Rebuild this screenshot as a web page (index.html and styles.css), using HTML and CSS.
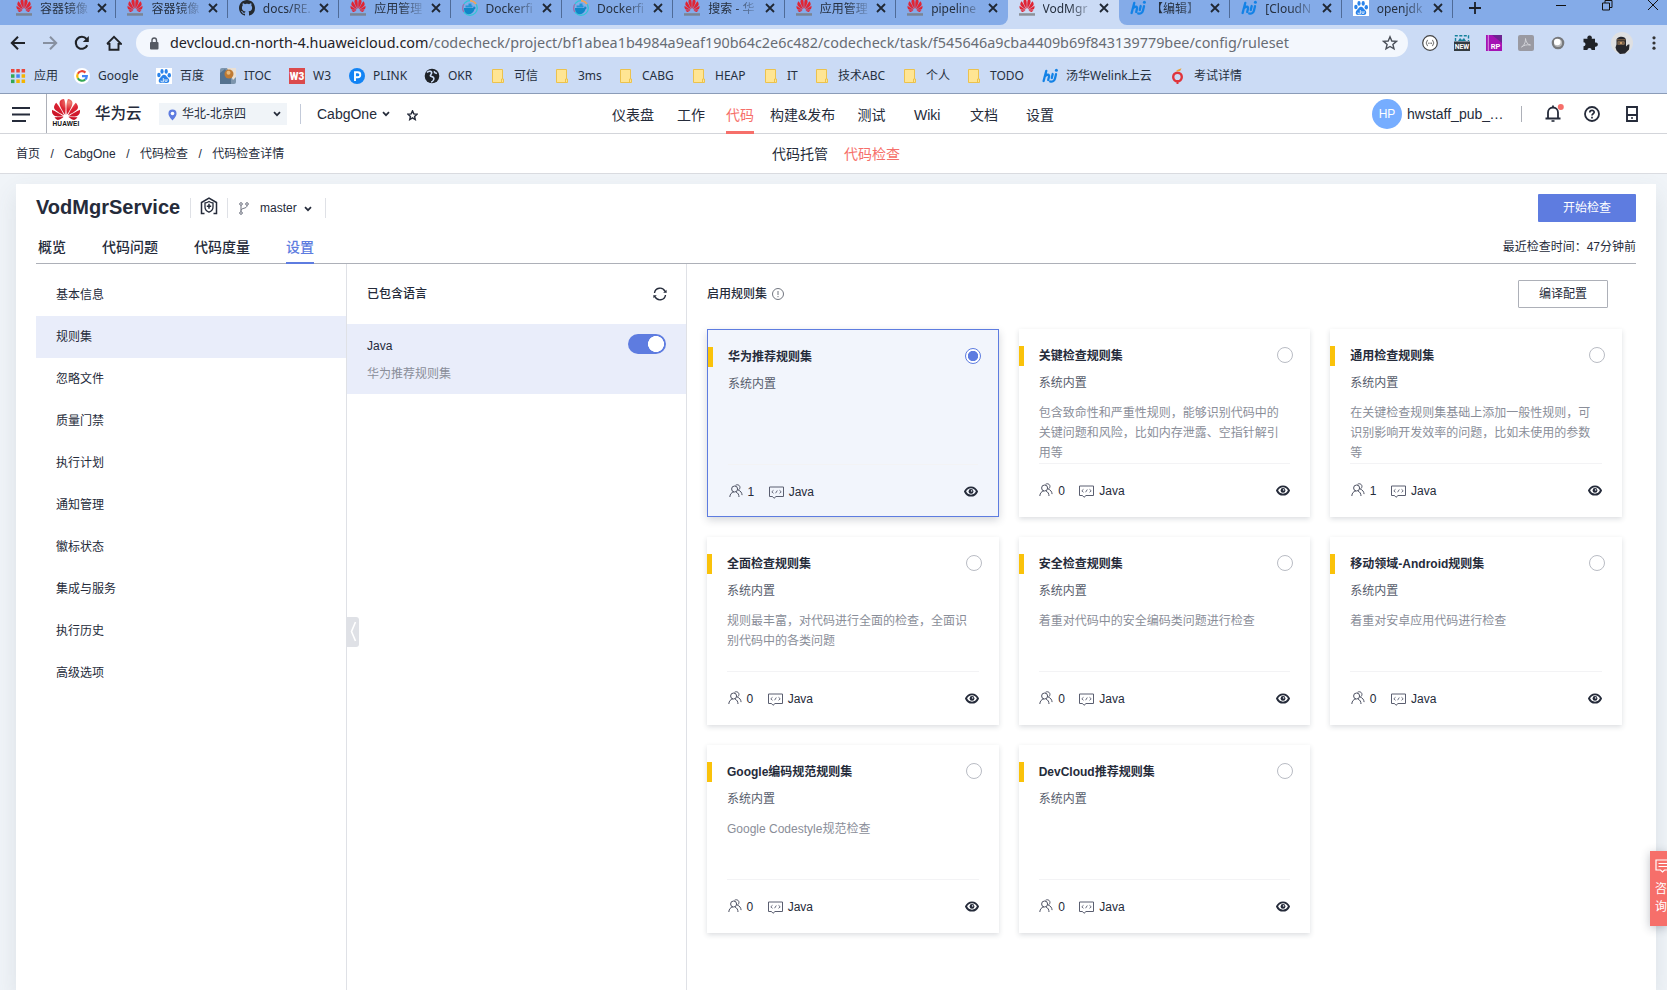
FILE: index.html
```html
<!DOCTYPE html>
<html lang="zh-CN">
<head>
<meta charset="utf-8">
<title>VodMgrService</title>
<link rel="stylesheet" href="styles.css">
</head>
<body>
<svg class="defs" xmlns="http://www.w3.org/2000/svg">
  <defs>
    <radialGradient id="petal" cx="0.6" cy="0.15" r="1"><stop offset="0" stop-color="#f0897a"/><stop offset="0.35" stop-color="#dd2433"/><stop offset="1" stop-color="#c00a20"/></radialGradient>
    <symbol id="hw" viewBox="0 2.9 24 18.2" preserveAspectRatio="none"><path d="M3.67 6.14S1.82 7.91 1.72 9.78v.35c.08 1.51 1.22 2.4 1.22 2.4 1.83 1.79 6.26 4.04 7.3 4.55 0 0 .06.03.1-.01l.02-.04v-.04C7.52 10.8 3.67 6.14 3.67 6.14zM9.65 18.6c-.02-.08-.1-.08-.1-.08l-7.38.26c.8 1.43 2.15 2.53 3.56 2.2.96-.25 3.16-1.78 3.88-2.3.06-.05.04-.09.04-.09zm.08-.78C6.49 15.63.21 12.28.21 12.28c-.15.46-.2.9-.21 1.3v.07c0 1.07.4 1.82.4 1.82.8 1.69 2.34 2.2 2.34 2.2.7.3 1.4.31 1.4.31.12.02 4.4 0 5.54 0 .05 0 .08-.05.08-.05v-.06c0-.03-.03-.05-.03-.05zM9.06 3.19a3.42 3.42 0 00-2.57 3.15v.41c.03.6.16 1.05.16 1.05.66 2.9 3.86 7.65 4.55 8.65.05.05.1.03.1.03a.1.1 0 00.06-.1c1.06-10.6-1.11-13.42-1.11-13.42-.32.02-1.19.23-1.19.23zm8.299 2.27s-.49-1.8-2.44-2.28c0 0-.57-.14-1.17-.22 0 0-2.18 2.81-1.12 13.43.01.07.06.08.06.08.07.03.1-.03.1-.03.72-1.03 3.9-5.76 4.55-8.64 0 0 .36-1.4.02-2.34zm-2.92 13.07s-.07 0-.09.05c0 0-.01.07.03.1.7.51 2.85 2 3.88 2.3 0 0 .16.05.43.06h.14c.69-.02 1.9-.37 3-2.26l-7.4-.25zm7.83-8.41c.14-2.06-1.94-3.97-1.94-3.98 0 0-3.85 4.66-6.67 10.8 0 0-.03.08.02.13l.04.01h.06c1.06-.53 5.46-2.77 7.28-4.54 0 0 1.15-.93 1.21-2.42zm1.52 2.14s-6.28 3.37-9.52 5.55c0 0-.05.04-.03.11 0 0 .03.06.07.06 1.16 0 5.56 0 5.67-.02 0 0 .57-.02 1.27-.29 0 0 1.56-.5 2.37-2.27 0 0 .73-1.45.17-3.14z"/></symbol>
    <symbol id="hwtab" viewBox="0 0 16 16"><svg x="0.2" y="-1" width="15.600" height="13"><use href="#hw"/></svg><rect x="0" y="13.200" width="16" height="2.500" fill="#777" opacity=".75"/></symbol>
    <symbol id="github" viewBox="0 0 16 16"><path d="M8 0C3.58 0 0 3.58 0 8c0 3.54 2.29 6.53 5.47 7.59.4.07.55-.17.55-.38 0-.19-.01-.82-.01-1.49-2.01.37-2.53-.49-2.69-.94-.09-.23-.48-.94-.82-1.13-.28-.15-.68-.52-.01-.53.63-.01 1.08.58 1.23.82.72 1.21 1.87.87 2.33.66.07-.52.28-.87.51-1.07-1.78-.2-3.64-.89-3.64-3.95 0-.87.31-1.59.82-2.15-.08-.2-.36-1.02.08-2.12 0 0 .67-.21 2.2.82.64-.18 1.32-.27 2-.27s1.36.09 2 .27c1.53-1.04 2.2-.82 2.2-.82.44 1.1.16 1.92.08 2.12.51.56.82 1.27.82 2.15 0 3.07-1.87 3.75-3.65 3.95.29.25.54.73.54 1.48 0 1.07-.01 1.93-.01 2.2 0 .21.15.46.55.38A8.01 8.01 0 0016 8c0-4.42-3.58-8-8-8z" fill="#24292e"/></symbol>
    <symbol id="docker" viewBox="0 0 16 16"><circle cx="8" cy="8" r="7.3" fill="none" stroke="#2fc6d6" stroke-width="1.3"/><path d="M8 .7A7.3 7.3 0 0 1 14 4" fill="none" stroke="#f0a35e" stroke-width="1.8"/><path d="M1.800 12A7.300 7.300 0 0 1 2 4" fill="none" stroke="#a86ab0" stroke-width="1.300"/><path d="M2 8h9l1-2 1 1.500 1 .3-1.500 1.400c-1 3.500-3.400 5-6 5C4 14.200 2 12 2 8z" fill="#0f86c8"/><path d="M3.500 5.600h7v2h-7zM6.500 3.600h3v2h-3z" fill="#1e96d6"/></symbol>
    <symbol id="hi" viewBox="0 0 16 16"><g fill="none" stroke="#1382e6" stroke-width="2.300" stroke-linecap="round"><path d="M4.300 2.800L1.600 13M3 8.300c2-2.300 4.600-2 4 .5L6.200 12M8.200 13.500c2.200.6 4.200-.6 4.800-3l1-4.300M10.700 6l-.9 4"/></g><circle cx="14.400" cy="2.200" r="1.500" fill="#1382e6"/></symbol>
    <symbol id="baidu" viewBox="0 0 16 16"><rect width="16" height="16" fill="#fff"/><g fill="#2a83ea"><ellipse cx="2.900" cy="7" rx="1.700" ry="2.200"/><ellipse cx="6" cy="3.400" rx="1.600" ry="2.300"/><ellipse cx="10.200" cy="3.400" rx="1.600" ry="2.300"/><ellipse cx="13.300" cy="7.200" rx="1.700" ry="2.200"/><path d="M8 6.800c2 0 2.600 2 4 3.200 2 1.800 1.600 5-1 5-1.300 0-1.800-.3-3-.3s-1.700.3-3 .3c-2.600 0-3-3.200-1-5C5.400 8.800 6 6.800 8 6.800z"/></g><path d="M5 12.500a1.200 1.200 0 1 0 2.300 0M7.300 10v3.500M9 11v2.300h2V11" stroke="#fff" stroke-width=".8" fill="none"/></symbol>
    <symbol id="x" viewBox="0 0 10 10"><path d="M1 1l8 8M9 1l-8 8" stroke="currentColor" stroke-width="1.800" fill="none"/></symbol>
    <symbol id="folder" viewBox="0 0 16 16"><path d="M2.500 1.500h10v9.500h1v3.500h-11z" fill="#ffe593" stroke="#ecc24d"/><path d="M11.500 14.500v-3.500h1" fill="none" stroke="#ecc24d"/></symbol>
    <symbol id="chev" viewBox="0 0 8 6"><path d="M1 1.200l3 3 3-3" stroke="currentColor" stroke-width="1.700" fill="none"/></symbol>
    <symbol id="users" viewBox="0 0 14 14"><g fill="none" stroke="#4e5263" stroke-width="1"><circle cx="5.600" cy="5" r="3"/><path d="M.8 13c.2-3 1.800-4.700 4-5M10 13c-.1-2.300-.9-4-3-5M6.500 1.300c2.500-1.600 5.300.6 4.200 3.200-.3.800-.8 1.200-1.400 1.600 2.200.7 3.600 2.500 3.800 5"/></g></symbol>
    <symbol id="code" viewBox="0 0 15 13"><path d="M.5 1h14v9.500H7l-2 1.800-1.500-1.800H.5z" fill="none" stroke="#5a5e70"/><path d="M4.500 4.300L2.800 5.800l1.700 1.500M10.500 4.300l1.700 1.500-1.700 1.500M8.300 4.500L6.600 7.200" fill="none" stroke="#5a5e70" stroke-width=".9"/></symbol>
    <symbol id="eye" viewBox="0 0 14 11"><path d="M1 5.500C3.500 0 10.500 0 13 5.500 10.500 11 3.500 11 1 5.500z" fill="none" stroke="#252b3a" stroke-width="1.900"/><circle cx="7" cy="5.400" r="2.400" fill="#252b3a"/><circle cx="7.600" cy="4.900" r=".8" fill="#cfd3dd"/></symbol>
  </defs>
</svg>

<div class="tabstrip">
  <div class="tab"><svg class="fav hw"><use href="#hwtab"/></svg><span>容器镜像</span><svg class="close"><use href="#x"/></svg></div>
  <div class="tab"><svg class="fav hw"><use href="#hwtab"/></svg><span>容器镜像</span><svg class="close"><use href="#x"/></svg></div>
  <div class="tab"><svg class="fav"><use href="#github"/></svg><span>docs/RE.</span><svg class="close"><use href="#x"/></svg></div>
  <div class="tab"><svg class="fav hw"><use href="#hwtab"/></svg><span>应用管理</span><svg class="close"><use href="#x"/></svg></div>
  <div class="tab"><svg class="fav"><use href="#docker"/></svg><span>Dockerfi</span><svg class="close"><use href="#x"/></svg></div>
  <div class="tab"><svg class="fav"><use href="#docker"/></svg><span>Dockerfi</span><svg class="close"><use href="#x"/></svg></div>
  <div class="tab"><svg class="fav hw"><use href="#hwtab"/></svg><span>搜索 - 华</span><svg class="close"><use href="#x"/></svg></div>
  <div class="tab"><svg class="fav hw"><use href="#hwtab"/></svg><span>应用管理</span><svg class="close"><use href="#x"/></svg></div>
  <div class="tab before"><svg class="fav hw"><use href="#hwtab"/></svg><span>pipeline</span><svg class="close"><use href="#x"/></svg></div>
  <div class="tab active"><svg class="fav hw"><use href="#hwtab"/></svg><span>VodMgr</span><svg class="close"><use href="#x"/></svg></div>
  <div class="tab after"><svg class="fav"><use href="#hi"/></svg><span class="brk">【编辑】</span><svg class="close"><use href="#x"/></svg></div>
  <div class="tab"><svg class="fav"><use href="#hi"/></svg><span>[CloudN</span><svg class="close"><use href="#x"/></svg></div>
  <div class="tab"><svg class="fav"><use href="#baidu"/></svg><span>openjdk</span><svg class="close"><use href="#x"/></svg></div>
  <svg class="plus" viewBox="0 0 12 12"><path d="M6 0v12M0 6h12" stroke="#1b1f27" stroke-width="1.800"/></svg>
  <div class="winctl">
    <svg viewBox="0 0 12 12"><path d="M1 6.500h10" stroke="#111"/></svg>
    <svg viewBox="0 0 12 12"><path d="M1.500 4h7v7h-7zM4 4V1.500h7V8.500H8.500" fill="none" stroke="#111"/></svg>
    <svg viewBox="0 0 12 12"><path d="M1 1l10 10M11 1L1 11" stroke="#111"/></svg>
  </div>
</div>

<div class="toolbar">
  <svg class="tb" viewBox="0 0 16 16"><path d="M15 8H2.500M8 1.800L1.800 8 8 14.200" fill="none" stroke="#1f2227" stroke-width="2"/></svg>
  <svg class="tb" viewBox="0 0 16 16"><path d="M1 8h12.500M8 1.800L14.200 8 8 14.200" fill="none" stroke="#8790a0" stroke-width="2"/></svg>
  <svg class="tb" viewBox="0 0 16 16"><path d="M13.300 10.300A6 6 0 1 1 12.500 4" fill="none" stroke="#1f2227" stroke-width="2.100"/><path d="M14.800 1v6H8.800z" fill="#1f2227"/></svg>
  <svg class="tb" viewBox="0 0 16 16"><path d="M3.500 8v6.800h9V8M1 8.800l7-7 7 7h-2.500M3.500 8.800H1" fill="none" stroke="#1f2227" stroke-width="1.900"/></svg>
  <div class="url">
    <svg class="lock" viewBox="0 0 10 13"><rect x="1" y="5" width="8.500" height="7.500" rx="1" fill="#555a63"/><path d="M3 5V3.300a2.200 2.200 0 0 1 4.500 0V5" fill="none" stroke="#555a63" stroke-width="1.400"/></svg>
    <div class="addr"><b>devcloud.cn-north-4.huaweicloud.com</b>/codecheck/project/bf1abea1b4984a9eaf190b64c2e6c482/codecheck/task/f545646a9cba4409b69f843139779bee/config/ruleset</div>
    <svg class="bstar" viewBox="0 0 16 16"><path d="M8 1.800l1.800 4.200 4.600.4-3.500 3 1.100 4.500L8 11.500l-4 2.400 1.100-4.500-3.500-3 4.600-.4z" fill="none" stroke="#4a4f58" stroke-width="1.400"/></svg>
  </div>
  <div class="exts">
    <svg viewBox="0 0 16 16"><circle cx="8" cy="8" r="7.300" fill="#fff" stroke="#444" stroke-width="1.200"/><path d="M5.800 5.200c-1.400 0-.4 2.200-1.900 2.800 1.500.6.500 2.800 1.900 2.800M10.200 5.200c1.400 0 .4 2.200 1.900 2.800-1.500.6-.5 2.800-1.900 2.800" fill="none" stroke="#444" stroke-width=".9"/><path d="M6.200 8.200h3.800" stroke="#444" stroke-dasharray="1 .4"/></svg>
    <svg viewBox="0 0 16 16"><path d="M1.500 6V.8h13V6" fill="none" stroke="#15829c" stroke-width="1.400" stroke-dasharray="3 1.500"/><path d="M4 6l2-3 2 2 2-2 2 3z" fill="#15829c"/><rect y="6.500" width="16" height="9.500" fill="#333b40"/><text x="8" y="14" font-size="6.800" font-weight="700" fill="#fff" text-anchor="middle" font-family="Roboto">NEW</text></svg>
    <svg viewBox="0 0 16 16"><rect width="16" height="16" fill="#a513b4"/><path d="M6 0h10v8z" fill="#6e2391"/><path d="M2.300 0v16" stroke="#e9b5ee" stroke-width=".8"/><text x="9.500" y="14" font-size="7.500" font-weight="700" fill="#fff" text-anchor="middle" font-family="Roboto">RP</text></svg>
    <svg viewBox="0 0 16 16"><rect width="16" height="16" rx="2" fill="#9a9aa2"/><path d="M3.500 12c2-.8 4.300-4.500 4-8.500.3 3.500 2 6 5 6.500-4-.6-6.500.2-9 2z" fill="none" stroke="#d2d3d8"/></svg>
    <svg viewBox="0 0 16 16"><circle cx="8" cy="8" r="5.200" fill="#b9babc" stroke="#77797c" stroke-width="2.200"/><circle cx="7.300" cy="7" r="3.300" fill="#fff"/></svg>
    <svg viewBox="0 0 16 16"><path d="M1.500 3.800h4a2.300 2.300 0 1 1 4.200 0h3.300v3.700a2.200 2.200 0 1 1 0 4.200v3.300H9.600a2.100 2.100 0 0 0-4.200 0H1.500v-3.800a2 2 0 0 0 0-4z" fill="#1f2227"/></svg>
    <svg class="ninja" viewBox="0 0 22 22"><circle cx="11" cy="11" r="11" fill="#dfe0e2"/><path d="M5.500 8.500c0-4.500 9-5 9.500-.5v6.500l2-2 1.500 0-.5 5-4 4-5 .5-3.500-3.500-1-3 1-3z" fill="#26262b"/><path d="M6.500 9.500h7v3h-7z" fill="#c89a6a"/><path d="M6.500 11h2.500M11 11h2" stroke="#26262b"/><path d="M6 7.800h8.500" stroke="#8a6a48" stroke-width="1"/></svg>
    <svg viewBox="0 0 16 16"><circle cx="8" cy="2.800" r="1.600" fill="#333"/><circle cx="8" cy="8" r="1.600" fill="#333"/><circle cx="8" cy="13.200" r="1.600" fill="#333"/></svg>
  </div>
</div>

<div class="bookmarks">
  <div><svg viewBox="0 0 16 16"><path d="M1 1h3.500v3.500H1zM6.300 1h3.500v3.500H6.300zM11.600 1h3.500v3.500h-3.500z" fill="#e8453c"/><path d="M1 6.300h3.500v3.500H1z" fill="#34a853"/><path d="M6.300 6.300h3.500v3.500H6.300z" fill="#4285f4"/><path d="M11.600 6.300h3.500v3.500h-3.500zM11.600 11.600h3.500v3.500h-3.500zM6.300 11.600h3.500v3.500H6.300z" fill="#f5b400"/><path d="M1 11.600h3.500v3.500H1z" fill="#34a853"/></svg>应用</div>
  <div><svg viewBox="0 0 16 16"><circle cx="8" cy="8" r="8" fill="#fff"/><g fill="none" stroke-width="2.200"><path d="M11.400 4.600A4.800 4.800 0 0 0 3.800 5.700" stroke="#ea4335"/><path d="M3.800 5.700a4.800 4.800 0 0 0 0 4.600" stroke="#fbbc05"/><path d="M3.800 10.300a4.800 4.800 0 0 0 7.400 1.200" stroke="#34a853"/><path d="M11.200 11.500a4.800 4.800 0 0 0 1.600-3.400H8" stroke="#4285f4"/></g></svg>Google</div>
  <div><svg><use href="#baidu"/></svg>百度</div>
  <div><svg viewBox="0 0 16 16"><rect width="16" height="16" rx="2" fill="#7d95ad"/><path d="M0 16V5l5-4 6 9v6z" fill="#55728f"/><path d="M7 0h9v9l-3 3z" fill="#eadfd2"/><circle cx="9" cy="6" r="4.500" fill="#bf7a33"/><circle cx="8.500" cy="4.800" r="2" fill="#e8b878"/></svg>ITOC</div>
  <div><svg viewBox="0 0 16 16"><rect width="16" height="16" fill="#db4a4c"/><text x="8" y="12" font-size="10" font-weight="900" fill="#fff" text-anchor="middle" font-family="Roboto" textLength="14.500">W3</text></svg>W3</div>
  <div><svg viewBox="0 0 16 16"><circle cx="8" cy="8" r="8" fill="#1283f4"/><path d="M6 13V4.200h2.800a2.500 2.500 0 0 1 0 5H7" fill="none" stroke="#fff" stroke-width="1.900"/></svg>PLINK</div>
  <div><svg viewBox="0 0 16 16"><circle cx="8" cy="8" r="7.300" fill="#1f2329"/><path d="M3 4.500c2.500-2.300 5.500-1 4.500 1S5.500 8 7.500 8.500s3 1.500 2 3.500-2.500 2-2.500 2M10.500 3c-.5 1.500.5 2 2.500 2.500" fill="none" stroke="#cbdbf5" stroke-width="1.600"/></svg>OKR</div>
  <div><svg><use href="#folder"/></svg>可信</div>
  <div><svg><use href="#folder"/></svg>3ms</div>
  <div><svg><use href="#folder"/></svg>CABG</div>
  <div><svg><use href="#folder"/></svg>HEAP</div>
  <div><svg><use href="#folder"/></svg>IT</div>
  <div><svg><use href="#folder"/></svg>技术ABC</div>
  <div><svg><use href="#folder"/></svg>个人</div>
  <div><svg><use href="#folder"/></svg>TODO</div>
  <div><svg><use href="#hi"/></svg>汤华Welink上云</div>
  <div><svg viewBox="0 0 16 16"><circle cx="7.500" cy="9" r="4.300" fill="none" stroke="#e0343c" stroke-width="2.400"/><path d="M7.500 13v3" stroke="#e0343c" stroke-width="2"/><path d="M5.500 3.200L9 1.200l2.500-1-1.500 3z" fill="#f0a02c"/></svg>考试详情</div>
</div>

<header class="top">
  <div class="burger"><svg viewBox="0 0 18 15"><path d="M0 1h18M0 7.500h18M0 14h14" stroke="#252b3a" stroke-width="2"/></svg></div>
  <div class="logo"><svg class="mark"><use href="#hw" fill="url(#petal)"/></svg><span>HUAWEI</span></div>
  <div class="brand">华为云</div>
  <div class="region"><svg class="pin" viewBox="0 0 10 13"><path d="M5 .5a4.500 4.500 0 0 1 4.500 4.500C9.500 8 5 12.500 5 12.500S.5 8 .5 5A4.500 4.500 0 0 1 5 .5z" fill="#5e7ce0"/><circle cx="5" cy="4.800" r="2" fill="#fff"/></svg><span>华北-北京四</span><svg class="chev"><use href="#chev"/></svg></div>
  <div class="proj"><span>CabgOne</span><svg class="chev"><use href="#chev"/></svg><svg class="star" viewBox="0 0 10 10"><path d="M5 .8l1.200 2.700 2.900.3-2.200 2 .6 2.900L5 7.200 2.500 8.700l.6-2.900-2.200-2 2.900-.3z" fill="none" stroke="#252b3a" stroke-width="1.300"/></svg></div>
  <nav class="nav">
    <a>仪表盘</a><a>工作</a><a class="on"><span>代码</span></a><a>构建&amp;发布</a><a>测试</a><a>Wiki</a><a>文档</a><a>设置</a>
  </nav>
  <div class="user">
    <div class="avatar">HP</div><span class="name">hwstaff_pub_<b>...</b></span><i></i>
    <svg class="bell" viewBox="0 0 19 18"><path d="M.5 14.500h15M3 14V8.500a5 5 0 0 1 10 0V14M8 1.500v2" fill="none" stroke="#252b3a" stroke-width="1.800"/><path d="M6.500 17h3" stroke="#252b3a" stroke-width="1.600"/><circle cx="15.800" cy="3" r="3" fill="#f66f6a"/></svg>
    <svg class="help" viewBox="0 0 16 16"><circle cx="8" cy="8" r="7" fill="none" stroke="#252b3a" stroke-width="1.800"/><path d="M5.800 6.500c0-3 4.500-2.800 4.400-.2C10.100 7.800 8 7.800 8 9.600M8 10.800v1.600" fill="none" stroke="#252b3a" stroke-width="1.700"/></svg>
    <svg class="phone" viewBox="0 0 12 16"><path d="M1 1h10v14H1zM1 9h10" fill="none" stroke="#252b3a" stroke-width="1.900"/><path d="M5 12h2" stroke="#252b3a" stroke-width="1.600"/></svg>
  </div>
</header>

<div class="crumbbar">
  <div class="crumbs"><span>首页</span><i>/</i><span>CabgOne</span><i>/</i><span>代码检查</span><i>/</i><span>代码检查详情</span></div>
  <div class="subnav"><span>代码托管</span><span class="on">代码检查</span></div>
</div>

<main class="panel">
  <div class="titlebar">
    <h1>VodMgrService</h1>
    <div class="badge"><svg viewBox="0 0 18 18"><path d="M4.500 16.500H1.500V5.500L9 1 16.500 5.500v11h-3" fill="none" stroke="#252b3a" stroke-width="1.500"/><path d="M9 4.500c1.500 1 2.500 1.300 4 1.500v4c0 2.500-1.500 4.200-4 5.200-2.500-1-4-2.700-4-5.200V6c1.500-.2 2.500-.5 4-1.500z" fill="none" stroke="#252b3a" stroke-width="1.300"/><path d="M9 6.800v5M6.800 9.300h4.400" stroke="#252b3a" stroke-width="1.500"/></svg></div>
    <div class="branch"><svg class="fork" viewBox="0 0 10 13"><g fill="none" stroke="#6a6e7c" stroke-width="1"><circle cx="2" cy="2" r="1.300"/><circle cx="8" cy="2" r="1.300"/><circle cx="2" cy="11" r="1.300"/><path d="M2 3.500v6M8 3.500C8 7 2.500 5.500 2 8.500"/></g></svg><span>master</span><svg class="chev"><use href="#chev"/></svg></div>
    <button class="primary">开始检查</button>
  </div>
  <div class="tabs"><span>概览</span><span>代码问题</span><span>代码度量</span><span class="on">设置</span><em>最近检查时间：47分钟前</em></div>
  <div class="cols">
    <ul class="menu"><li>基本信息</li><li class="on">规则集</li><li>忽略文件</li><li>质量门禁</li><li>执行计划</li><li>通知管理</li><li>徽标状态</li><li>集成与服务</li><li>执行历史</li><li>高级选项</li></ul>
    <section class="langs">
      <div class="head"><span>已包含语言</span><svg viewBox="0 0 14 14"><path d="M1.500 6A5.500 5.500 0 0 1 12 4.500M12.500 8A5.500 5.500 0 0 1 2 9.500" fill="none" stroke="#252b3a" stroke-width="1.400"/><path d="M13.800 5.800h-3.600l3.200-3zM.2 8.200h3.600l-3.200 3z" fill="#252b3a"/></svg></div>
      <div class="lang"><div><b>Java</b><p>华为推荐规则集</p></div><div class="toggle"></div></div>
      <div class="handle"><svg viewBox="0 0 12 30"><path d="M8.500 5L4.500 14.500l4 9.500" fill="none" stroke="#fff" stroke-width="1.600"/></svg></div>
    </section>
    <section class="rules">
      <div class="head"><span>启用规则集</span><svg viewBox="0 0 12 12"><circle cx="6" cy="6" r="5.500" fill="none" stroke="#71757f"/><path d="M6 3v4M6 8v1.200" stroke="#71757f"/></svg><button>编译配置</button></div>
      <div class="grid">
        <article class="card sel"><h3>华为推荐规则集</h3><h4>系统内置</h4><p></p><footer><svg class="u"><use href="#users"/></svg><span>1</span><svg class="c"><use href="#code"/></svg><span>Java</span><svg class="e"><use href="#eye"/></svg></footer><i class="radio"></i></article>
        <article class="card"><h3>关键检查规则集</h3><h4>系统内置</h4><p>包含致命性和严重性规则，能够识别代码中的关键问题和风险，比如内存泄露、空指针解引用等</p><footer><svg class="u"><use href="#users"/></svg><span>0</span><svg class="c"><use href="#code"/></svg><span>Java</span><svg class="e"><use href="#eye"/></svg></footer><i class="radio"></i></article>
        <article class="card"><h3>通用检查规则集</h3><h4>系统内置</h4><p>在关键检查规则集基础上添加一般性规则，可识别影响开发效率的问题，比如未使用的参数等</p><footer><svg class="u"><use href="#users"/></svg><span>1</span><svg class="c"><use href="#code"/></svg><span>Java</span><svg class="e"><use href="#eye"/></svg></footer><i class="radio"></i></article>
        <article class="card"><h3>全面检查规则集</h3><h4>系统内置</h4><p>规则最丰富，对代码进行全面的检查，全面识别代码中的各类问题</p><footer><svg class="u"><use href="#users"/></svg><span>0</span><svg class="c"><use href="#code"/></svg><span>Java</span><svg class="e"><use href="#eye"/></svg></footer><i class="radio"></i></article>
        <article class="card"><h3>安全检查规则集</h3><h4>系统内置</h4><p>着重对代码中的安全编码类问题进行检查</p><footer><svg class="u"><use href="#users"/></svg><span>0</span><svg class="c"><use href="#code"/></svg><span>Java</span><svg class="e"><use href="#eye"/></svg></footer><i class="radio"></i></article>
        <article class="card"><h3>移动领域-Android规则集</h3><h4>系统内置</h4><p>着重对安卓应用代码进行检查</p><footer><svg class="u"><use href="#users"/></svg><span>0</span><svg class="c"><use href="#code"/></svg><span>Java</span><svg class="e"><use href="#eye"/></svg></footer><i class="radio"></i></article>
        <article class="card"><h3>Google编码规范规则集</h3><h4>系统内置</h4><p>Google Codestyle规范检查</p><footer><svg class="u"><use href="#users"/></svg><span>0</span><svg class="c"><use href="#code"/></svg><span>Java</span><svg class="e"><use href="#eye"/></svg></footer><i class="radio"></i></article>
        <article class="card"><h3>DevCloud推荐规则集</h3><h4>系统内置</h4><p></p><footer><svg class="u"><use href="#users"/></svg><span>0</span><svg class="c"><use href="#code"/></svg><span>Java</span><svg class="e"><use href="#eye"/></svg></footer><i class="radio"></i></article>
      </div>
    </section>
  </div>
</main>

<aside class="consult"><svg viewBox="0 0 16 14"><path d="M1 1h14v10H9.500L7.500 13l-2-2H1z" fill="none" stroke="#fff" stroke-width="1.200"/><path d="M3.500 4.500H16M3.500 7.500H16" stroke="#fff" stroke-width="1.200"/></svg><span>咨</span><span>询</span></aside>
</body>
</html>
```
FILE: styles.css
```css
* { box-sizing: border-box; }
html, body { height: 990px; overflow: hidden; }
body {
  margin: 0;
  display: flex;
  flex-direction: column;
  background: #f0f4f8;
  color: #252b3a;
  font: 12px/20px "Liberation Sans", "Noto Sans CJK SC", sans-serif;
  white-space: nowrap;
}
svg { display: block; flex: none; }
h1, h3, h4, p, ul { margin: 0; padding: 0; }
i, em { font-style: normal; }
button { font: inherit; padding: 0; }
.defs { position: absolute; width: 0; height: 0; }
.chev { width: 8px; height: 6px; }

/* browser chrome */
.tabstrip { height: 25px; flex: none; display: flex; padding-left: 5px; background: linear-gradient(to right, #84abe8 0 960px, #cbdbf5 960px 1160px, #84abe8 1160px); }
.tab { width: 111.4px; height: 25px; display: flex; padding-left: 11px; position: relative; background: #84abe8; font: 12px/18px "Noto Sans", "Noto Sans CJK SC", sans-serif; color: #26303f; }
.tab::after { content: ""; position: absolute; right: 0; top: 0; width: 1px; height: 18px; background: #4f6b98; }
.tab.before { border-bottom-right-radius: 8px; }
.tab.before::after, .tab.active::after { display: none; }
.tab.active { background: #cbdbf5; }
.tab.after { border-bottom-left-radius: 8px; }
.tab .fav { width: 16px; height: 16px; }
.tab .hw { fill: #e02434; }
.tab span { margin-left: 8px; width: 49px; -webkit-mask-image: linear-gradient(to right, #000 26px, rgba(0,0,0,.15)); mask-image: linear-gradient(to right, #000 26px, rgba(0,0,0,.15)); }
.tab .brk { margin-left: 5px; width: 52px; }
.tab .close { width: 10px; height: 10px; margin: 3px 0 0 7.500px; color: #1f2733; }
.plus { width: 12px; height: 12px; margin: 2px 0 0 16px; }
.winctl { margin: -1px 8px 0 auto; display: flex; gap: 34px; }
.winctl svg { width: 12px; height: 12px; }

.toolbar { height: 36px; flex: none; display: flex; align-items: center; background: #cbdbf5; padding-left: 10px; }
.tb { width: 16px; height: 16px; margin-right: 16px; }
.url { width: 1272px; height: 28px; margin-left: -2px; border-radius: 14px; background: #f3f7fd; display: flex; align-items: center; padding: 0 10px 0 13px; }
.lock { width: 10px; height: 13px; }
.addr { margin-left: 11px; flex: 1; font: 14.380px/20px "Noto Sans", sans-serif; color: #676c74; }
.addr b { font-weight: 400; color: #1f2227; }
.bstar { width: 16px; height: 16px; }
.exts { display: flex; align-items: center; gap: 16px; margin-left: 14px; }
.exts svg { width: 16px; height: 16px; }
.exts .ninja { width: 22px; height: 22px; margin: 0 -3px; }

.bookmarks {
  height: 33px; flex: none; padding: 0 0 3px 10px; background: #cbdbf5; border-bottom: 1px solid #8b9cb8;
  display: grid; align-items: center;
  grid-template-columns: 64px 82px 64px 69px 60px 75px 66px 64px 64px 73px 72px 51px 88px 64px 76px 128px 120px;
  font: 12px/18px "Noto Sans", "Noto Sans CJK SC", sans-serif; color: #26303f;
}
.bookmarks div { display: flex; align-items: center; gap: 8px; }
.bookmarks svg { width: 16px; height: 16px; }

/* site header */
.top { height: 40px; flex: none; display: flex; align-items: center; background: #fff; border-bottom: 1px solid #d3d5da; }
.burger { width: 47px; height: 39px; padding: 13px 0 0 12px; border-right: 1px solid #adb0b8; }
.burger svg { width: 18px; height: 15px; }
.logo { width: 30px; margin-left: 4px; display: flex; flex-direction: column; align-items: center; }
.logo .mark { width: 28px; height: 21px; }
.logo span { font: bold 6.500px/8px "Liberation Sans", sans-serif; color: #111; letter-spacing: .2px; }
.brand { margin-left: 14px; width: 64px; font-size: 15.500px; font-weight: 500; }
.region { width: 128px; height: 22px; background: #f0f4f8; display: flex; align-items: center; padding: 0 6px 0 9px; }
.pin { width: 9px; height: 12px; margin: 2px 5px 0 0; }
.region .chev { margin-left: auto; }
.proj { width: 312px; height: 20px; margin-left: 13px; border-left: 1px solid #c3cad9; padding-left: 16px; display: flex; align-items: center; font-size: 14px; }
.proj .chev { margin-left: 5px; }
.star { width: 11px; height: 11px; margin: 4px 0 0 17.500px; }
.nav { width: 520px; height: 40px; margin-top: 1px; display: grid; grid-template-columns: 65px 49px 44px 87.500px 56.500px 56px 56px 50px; font-size: 14px; line-height: 42px; }
.nav .on span { display: block; width: 28px; height: 40px; border-bottom: 3px solid #f66f6a; color: #f66f6a; }
.user { margin-left: auto; width: 295px; display: flex; align-items: center; font-size: 14px; }
.avatar { width: 30px; height: 30px; border-radius: 50%; background: #76adff; color: #fff; font-size: 12px; line-height: 30px; text-align: center; }
.name { margin-left: 5px; width: 114px; }
.name b { font-weight: 400; letter-spacing: .6px; }
.user i { width: 1px; height: 16px; background: #adb0b8; }
.bell { width: 19px; height: 18px; margin: -2px 0 0 22.500px; }
.help { width: 16px; height: 16px; margin-left: 20.500px; }
.phone { width: 12px; height: 16px; margin-left: 26px; }

.crumbbar { height: 40px; flex: none; display: flex; align-items: center; background: #fff; border-bottom: 1px solid #dadce1; padding-left: 16px; }
.crumbs { width: 756px; display: flex; }
.crumbs i { width: 24.300px; text-align: center; }
.subnav { display: flex; gap: 16px; font-size: 14px; }
.subnav .on { color: #f66f6a; }

/* content panel */
.panel { flex: 1; min-height: 0; margin: 10px 11px 0 16px; padding: 10px 20px 0; background: #fff; box-shadow: 0 10px 22px rgba(70, 90, 110, .12); display: flex; flex-direction: column; }
.titlebar { height: 28px; flex: none; display: flex; align-items: center; }
.titlebar h1 { width: 154px; font-size: 20px; line-height: 24px; margin-top: -2px; }
.badge { width: 38px; height: 20px; border: solid #dfe1e6; border-width: 0 1px; padding: 0 0 0 9px; margin-top: -1px; }
.badge svg { width: 18px; height: 18px; margin-top: -1px; }
.branch { width: 98px; height: 20px; margin-top: -1px; border-right: 1px solid #dfe1e6; display: flex; align-items: center; padding-left: 11px; }
.fork { width: 10px; height: 13px; margin: 1px 11px 0 0; }
.branch .chev { margin: 2px 0 0 7px; }
.primary { margin-left: auto; width: 98px; height: 28px; border: 0; border-radius: 1px; background: #5e7ce0; color: #fff; }
.tabs { height: 42px; flex: none; display: flex; gap: 36px; padding-left: 2px; border-bottom: 1px solid #adb0b8; font-size: 14px; font-weight: 500; }
.tabs span { height: 42px; padding-top: 15px; }
.tabs .on { color: #5e7ce0; border-bottom: 2px solid #5e7ce0; }
.tabs em { margin-left: auto; padding-top: 15px; font-size: 12px; font-weight: 400; }
.cols { flex: 1; min-height: 0; display: flex; }
.menu { width: 311px; padding-top: 10px; border-right: 1px solid #dfe1e6; list-style: none; }
.menu li { height: 42px; line-height: 42px; padding-left: 20px; }
.menu .on { background: #e9edfa; }
.langs { width: 340px; border-right: 1px solid #dfe1e6; position: relative; }
.head { display: flex; align-items: center; height: 60px; font-weight: 500; }
.langs .head { padding: 0 19px 0 20px; justify-content: space-between; }
.langs .head svg { width: 14px; height: 14px; }
.lang { height: 70px; background: #e9edfa; display: flex; justify-content: space-between; padding: 10px 20px; }
.lang b { display: block; font-weight: 400; padding-top: 2px; }
.lang p { color: #8a8e99; padding-top: 8px; }
.toggle { width: 38px; height: 20px; border-radius: 10px; background: radial-gradient(circle at 28px 10px, #fff 7.700px, #5e7ce0 8.300px); }
.handle { position: absolute; left: 0; top: 353px; width: 12px; height: 30px; background: #dfe1e6; border-radius: 0 3px 3px 0; }
.rules { flex: 1; padding-left: 20px; }
.rules .head { height: 60px; padding-right: 28px; }
.rules .head svg { width: 12px; height: 12px; margin-left: 5px; }
.rules .head button { margin-left: auto; width: 90px; height: 28px; background: #fff; border: 1px solid #adb0b8; border-radius: 1px; color: #252b3a; font-weight: 400; }
.grid { margin-top: 5px; width: 915px; display: grid; grid-template-columns: repeat(3, 1fr); grid-auto-rows: 188px; gap: 20px; }
.card { position: relative; background: #fff; padding: 17px 20px 0; box-shadow: 0 2px 5px rgba(40, 50, 70, .16); display: flex; flex-direction: column; }
.card::before { content: ""; position: absolute; left: 0; top: 17px; width: 5px; height: 20px; background: #fac20a; }
.card h3 { font-size: 12px; font-weight: 700; line-height: 20px; }
.card h4 { font-size: 12px; font-weight: 400; line-height: 20px; margin-top: 7px; color: #575d6c; }
.card p { height: 60px; margin-top: 10px; white-space: normal; color: #8a8e99; width: 244px; }
.card footer { height: 54px; flex: none; border-top: 1px solid #f3f3f5; display: flex; align-items: center; }
.card .u { width: 14px; height: 14px; margin: -1px 5px 0 .500px; }
.card .c { width: 15px; height: 13px; margin: 2px 5px 0 14.500px; }
.card .e { width: 14px; height: 11px; margin: -1px 0 0 auto; }
.radio { position: absolute; right: 17px; top: 18px; width: 16px; height: 16px; border: 1px solid #b9bcc4; border-radius: 50%; }
.sel { background: #f2f5fc; border: 1px solid #5e7ce0; box-shadow: 0 3px 8px rgba(40, 50, 70, .2); }
.sel p { flex: none; }
.sel .radio { border-color: #5e7ce0; background: radial-gradient(circle, #5e7ce0 4.800px, #fff 5.500px); }

.consult { position: absolute; right: 0; top: 851px; width: 17px; height: 75px; padding: 8px 0 0 5px; overflow: hidden; background: #f66f6a; color: #fff; display: flex; flex-direction: column; line-height: 18px; box-shadow: 0 2px 10px rgba(40, 50, 70, .3); }
.consult svg { width: 16px; height: 14px; margin-bottom: 7px; }
```
